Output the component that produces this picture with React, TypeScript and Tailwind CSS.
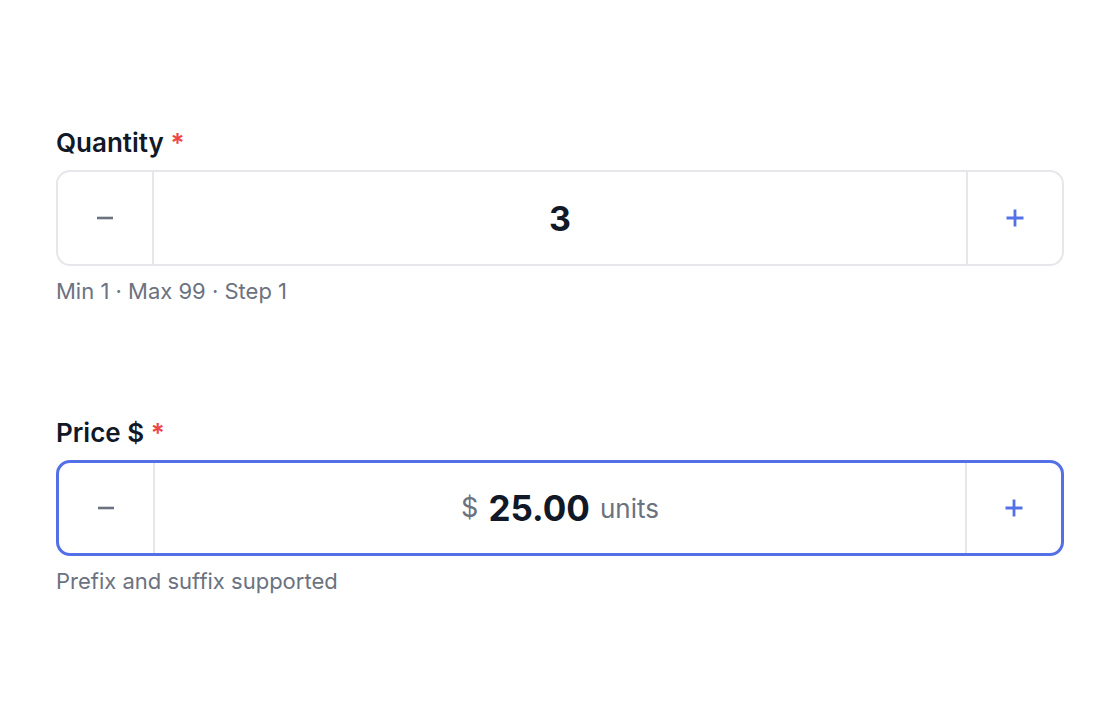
import React from "react";

function Minus() {
  return (
    <svg width="18" height="18" viewBox="0 0 18 18" fill="none">
      <path d="M1 9H17" stroke="#6b7280" strokeWidth="2.6" />
    </svg>
  );
}
function Plus() {
  return (
    <svg width="20" height="20" viewBox="0 0 20 20" fill="none">
      <path d="M1.5 10H18.5M10 1.5V18.5" stroke="#5470e6" strokeWidth="2.8" />
    </svg>
  );
}

function Field({
  label,
  helper,
  focused,
  children,
}: {
  label: string;
  helper: string;
  focused?: boolean;
  children: React.ReactNode;
}) {
  return (
    <div>
      <div className="text-[26px] leading-[32px] font-semibold text-[#111827]">
        {label} <span className="text-[#ef4444]">*</span>
      </div>
      <div
        className={
          "mt-[11px] h-[96px] flex rounded-[14px] bg-white " +
          (focused ? "border-[3px] border-[#5470e6]" : "border-2 border-[#e5e7eb]")
        }
      >
        <div className="w-[96px] flex items-center justify-center border-r-2 border-[#e5e7eb]">
          <Minus />
        </div>
        <div className="flex-1 flex items-center justify-center">{children}</div>
        <div className="w-[96px] flex items-center justify-center border-l-2 border-[#e5e7eb]">
          <Plus />
        </div>
      </div>
      <div className="mt-[12px] text-[22px] leading-[26px] text-[#6b7280]">{helper}</div>
    </div>
  );
}

export default function App() {
  return (
    <div
      className="w-[1120px] h-[720px] bg-white px-[56px] pt-[127px]"
      style={{ fontFamily: "Inter, 'Noto Sans', sans-serif" }}
    >
      <div className="w-[1008px] flex flex-col gap-[113px]">
        <Field label="Quantity" helper="Min 1 · Max 99 · Step 1">
          <span className="text-[34px] font-bold text-[#111827]">3</span>
        </Field>
        <Field label="Price $" helper="Prefix and suffix supported" focused>
          <span className="flex items-center gap-[10px]">
            <span className="text-[27px] text-[#6b7280]">$</span>
            <span className="text-[35px] font-bold text-[#111827]">25.00</span>
            <span className="text-[26px] text-[#6b7280]">units</span>
          </span>
        </Field>
      </div>
    </div>
  );
}
